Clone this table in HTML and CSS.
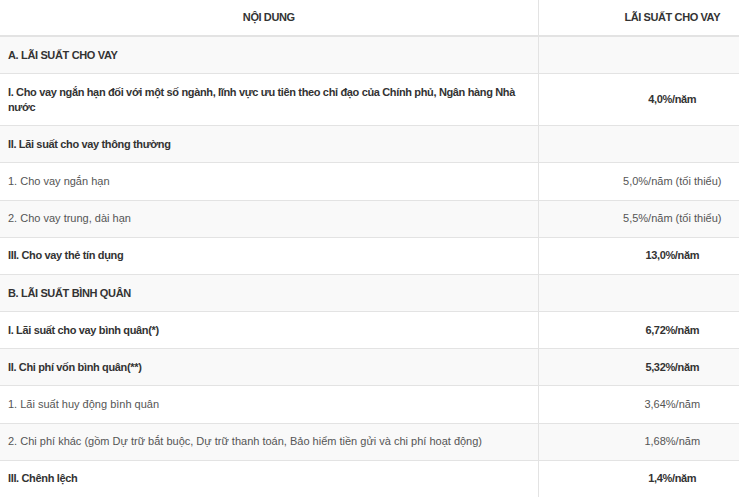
FILE: index.html
```html
<!DOCTYPE html>
<html lang="vi">
<head>
<meta charset="utf-8">
<title>Lãi suất cho vay</title>
<link rel="stylesheet" href="styles.css">
</head>
<body>
<div class="wrap">
<table class="rates">
  <colgroup><col class="c-content"><col class="c-rate"></colgroup>
  <thead>
    <tr><th>NỘI DUNG</th><th>LÃI SUẤT CHO VAY</th></tr>
  </thead>
  <tbody>
    <tr class="b"><td>A. LÃI SUẤT CHO VAY</td><td></td></tr>
    <tr class="b"><td>I. Cho vay ngắn hạn đối với một số ngành, lĩnh vực ưu tiên theo chỉ đạo của Chính phủ, Ngân hàng Nhà nước</td><td>4,0%/năm</td></tr>
    <tr class="b"><td>II. Lãi suất cho vay thông thường</td><td></td></tr>
    <tr><td>1. Cho vay ngắn hạn</td><td>5,0%/năm (tối thiểu)</td></tr>
    <tr><td>2. Cho vay trung, dài hạn</td><td>5,5%/năm (tối thiểu)</td></tr>
    <tr class="b"><td>III. Cho vay thẻ tín dụng</td><td>13,0%/năm</td></tr>
    <tr class="b"><td>B. LÃI SUẤT BÌNH QUÂN</td><td></td></tr>
    <tr class="b"><td>I. Lãi suất cho vay bình quân(*)</td><td>6,72%/năm</td></tr>
    <tr class="b"><td>II. Chi phí vốn bình quân(**)</td><td>5,32%/năm</td></tr>
    <tr><td>1. Lãi suất huy động bình quân</td><td>3,64%/năm</td></tr>
    <tr><td>2. Chi phí khác (gồm Dự trữ bắt buộc, Dự trữ thanh toán, Bảo hiểm tiền gửi và chi phí hoạt động)</td><td>1,68%/năm</td></tr>
    <tr class="b"><td>III. Chênh lệch</td><td>1,4%/năm</td></tr>
  </tbody>
</table>
</div>
</body>
</html>
```

FILE: styles.css
```css
html, body {
  margin: 0;
  padding: 0;
  background: #fff;
}
body {
  font-family: "Liberation Sans", Arial, sans-serif;
  font-size: 11px;
  color: #555;
}
.wrap {
  width: 739px;
  overflow: hidden;
}
.rates {
  width: 806px;
  border-collapse: collapse;
  table-layout: fixed;
}
.c-content { width: 538px; }
.c-rate { width: 268px; }
.rates th, .rates td {
  padding: 10.58px 8px;
  line-height: 15px;
  border-top: 1px solid #e3e3e3;
  vertical-align: middle;
}
.rates th + th, .rates td + td {
  border-left: 1px solid #e3e3e3;
  text-align: center;
}
.rates th {
  border-top: none;
  border-bottom: 2px solid #e3e3e3;
  color: #333;
  font-weight: bold;
  letter-spacing: -0.4px;
  text-align: center;
  padding: 10px 8px 10px;
}
.rates tbody tr:nth-child(odd) {
  background: #f9f9f9;
}
.rates tr.b td {
  font-weight: bold;
  letter-spacing: -0.35px;
  color: #333;
}
```
